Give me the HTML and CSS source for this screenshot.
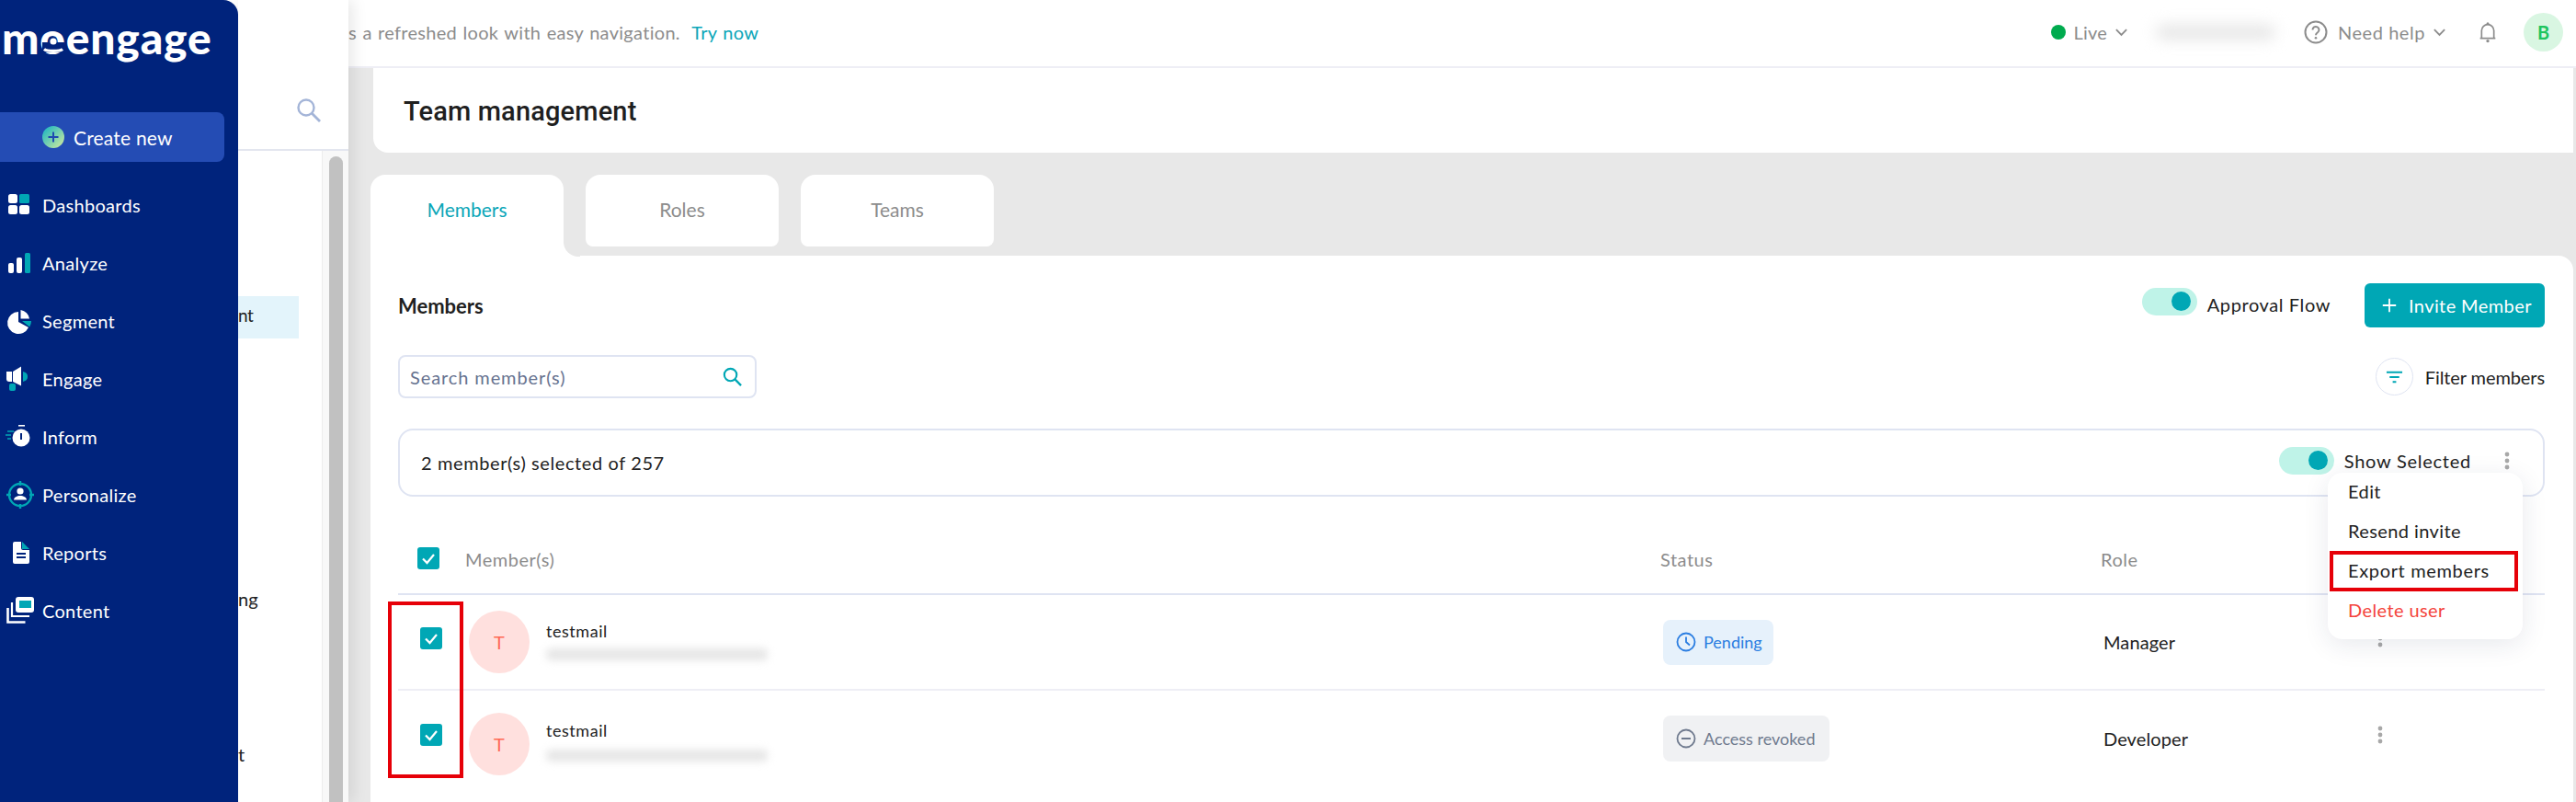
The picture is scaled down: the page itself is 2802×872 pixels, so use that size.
FILE: index.html
```html
<!DOCTYPE html>
<html lang="en">
<head>
<meta charset="utf-8">
<title>Team management</title>
<link rel="stylesheet" href="styles.css">
</head>
<body>
<div class="app">
  <aside class="sidebar">
    <div class="logo">moengage<svg class="logo-person" viewBox="0 0 30 30"><rect x="3" y="17" width="24" height="11" fill="#00237c"/><circle cx="15" cy="16" r="3.600" fill="#fff"/><path d="M5 24.500c3 2.500 17 2.500 20 0" fill="none" stroke="#fff" stroke-width="3.200"/></svg></div>
    <button class="create"><svg class="create-icon" viewBox="0 0 24 24"><defs><linearGradient id="cg" x1="0" y1="0" x2="1" y2="1"><stop offset="0" stop-color="#10b3c4"/><stop offset="1" stop-color="#d8ec9c"/></linearGradient></defs><circle cx="12" cy="12" r="12" fill="url(#cg)"/><path d="M12 6.500v11M6.500 12h11" stroke="#1f4ab0" stroke-width="2"/></svg>Create new</button>
    <nav class="nav">
      <a class="nav-item"><svg viewBox="0 0 34 34"><rect x="6" y="5" width="10" height="10" rx="2.500" fill="#fff"/><rect x="18" y="5" width="11" height="10" rx="1.500" fill="#00a7b5"/><rect x="6" y="17" width="10" height="10" rx="2.500" fill="#fff"/><rect x="18" y="17" width="11" height="10" rx="2.500" fill="#fff"/></svg>Dashboards</a>
      <a class="nav-item"><svg viewBox="0 0 34 34"><rect x="6" y="17" width="6" height="11" rx="2" fill="#fff"/><rect x="15" y="11" width="6" height="17" rx="2" fill="#fff"/><rect x="24" y="6" width="6" height="22" rx="1.500" fill="#00a7b5"/></svg>Analyze</a>
      <a class="nav-item"><svg viewBox="0 0 34 34"><path d="M17 7a12 12 0 1 0 11 17l-11-6z" fill="#fff"/><path d="M19.500 5a12 12 0 0 1 9.500 9.500h-9.500z" fill="#fff"/><path d="M21 17h10a12 12 0 0 1-1.800 6.500z" fill="#00a7b5"/></svg>Segment</a>
      <a class="nav-item"><svg viewBox="0 0 34 34"><path d="M4 9h6v11H7a3 3 0 0 1-3-3z" fill="#fff"/><path d="M11 9l9-5.500v21L11 20z" fill="#fff"/><path d="M22 9c3 1 5 2 5 5.500s-2 4.500-5 5.500z" fill="#00a7b5"/><rect x="7" y="22" width="7" height="8" rx="2" fill="#00a7b5"/></svg>Engage</a>
      <a class="nav-item"><svg viewBox="0 0 34 34"><circle cx="20" cy="18" r="9.500" fill="#fff"/><rect x="17" y="4" width="7" height="1.600" fill="#fff"/><rect x="19" y="13" width="2" height="7" fill="#00237c"/><path d="M5 11h7M3 15h6M5 19h4" stroke="#00a7b5" stroke-width="1.600"/></svg>Inform</a>
      <a class="nav-item"><svg viewBox="0 0 34 34"><circle cx="19" cy="17" r="12" fill="none" stroke="#00a7b5" stroke-width="2.400"/><path d="M19 2v5M19 27v5M4 17h5M29 17h5" stroke="#00a7b5" stroke-width="2.400"/><circle cx="19" cy="13" r="3.600" fill="#fff"/><path d="M12 22.500c.5-6 13.500-6 14 0z" fill="#fff"/></svg>Personalize</a>
      <a class="nav-item"><svg viewBox="0 0 34 34"><path d="M11 7a2 2 0 0 1 2-2h7v7a2 2 0 0 0 2 2h7v13a2 2 0 0 1-2 2H13a2 2 0 0 1-2-2z" fill="#fff"/><path d="M21 5l8 8h-8z" fill="#00a7b5"/><path d="M15 18h10M15 22h10" stroke="#00237c" stroke-width="2"/></svg>Reports</a>
      <a class="nav-item"><svg viewBox="0 0 34 34"><rect x="14" y="2" width="20" height="17" rx="3" fill="#fff"/><rect x="18" y="6" width="13" height="8" fill="#00a7b5"/><path d="M10 8v15h19" fill="none" stroke="#fff" stroke-width="2.200"/><path d="M5.500 14v15.500h19" fill="none" stroke="#fff" stroke-width="2.600"/></svg>Content</a>
    </nav>
  </aside>

  <aside class="subpanel">
    <div class="sub-head"><svg class="sub-search" viewBox="0 0 28 28"><circle cx="11" cy="11" r="8.500" fill="none" stroke="#a4b5d8" stroke-width="2.400"/><path d="M17 17l9 9" stroke="#a4b5d8" stroke-width="2.800"/></svg></div>
    <div class="sub-body">
      <div class="sub-list">
        <div class="sub-item sub-active">nt</div>
        <div class="sub-item sub-ng">ng</div>
        <div class="sub-item sub-t">t</div>
      </div>
      <div class="sub-track"><div class="sub-thumb"></div></div>
    </div>
  </aside>

  <main class="main">
    <header class="topbar">
      <p class="promo">s a refreshed look with easy navigation. <a class="try">Try now</a></p>
      <div class="top-right">
        <span class="dot-live"></span><span class="top-text top-live">Live</span>
        <svg class="chev" viewBox="0 0 16 10"><path d="M2 2l6 6 6-6" fill="none" stroke="#8c8c8c" stroke-width="2"/></svg>
        <span class="blur-account"></span>
        <svg class="help" viewBox="0 0 26 26"><circle cx="13" cy="13" r="11.500" fill="none" stroke="#8c8c8c" stroke-width="2"/><path d="M9.500 10.500a3.500 3.500 0 1 1 5.500 2.800c-1.300.9-2 1.500-2 3" fill="none" stroke="#8c8c8c" stroke-width="2"/><circle cx="13" cy="19.300" r="1.300" fill="#8c8c8c"/></svg>
        <span class="top-text top-help">Need help</span>
        <svg class="chev" viewBox="0 0 16 10"><path d="M2 2l6 6 6-6" fill="none" stroke="#8c8c8c" stroke-width="2"/></svg>
        <svg class="bell" viewBox="0 0 24 28"><path d="M4 21V12a8 8 0 0 1 16 0v9M2 22h20" fill="none" stroke="#8c8c8c" stroke-width="2"/><circle cx="12" cy="3" r="1.800" fill="#8c8c8c"/><circle cx="12" cy="25.500" r="2" fill="#8c8c8c"/></svg>
        <span class="user">B</span>
      </div>
    </header>

    <section class="title-card"><h1>Team management</h1></section>

    <div class="tabs">
      <div class="tab tab-active">Members</div>
      <div class="tab">Roles</div>
      <div class="tab">Teams</div>
    </div>

    <section class="card">
      <div class="row-head">
        <h2>Members</h2>
        <div class="head-actions">
          <span class="toggle"><span class="knob"></span></span>
          <span class="label approval">Approval Flow</span>
          <button class="invite"><svg viewBox="0 0 20 20"><path d="M10 2v16M2 10h16" stroke="#fff" stroke-width="2"/></svg>Invite Member</button>
        </div>
      </div>

      <div class="row-search">
        <div class="search"><span>Search member(s)</span><svg viewBox="0 0 24 24"><circle cx="10" cy="10" r="7" fill="none" stroke="#00a7b5" stroke-width="2.200"/><path d="M15 15l7 7" stroke="#00a7b5" stroke-width="2.400"/></svg></div>
        <div class="filter"><span class="filter-btn"><svg viewBox="0 0 20 14"><path d="M1 1.500h18M4.500 7h11M8 12.500h4" stroke="#00a7b5" stroke-width="2"/></svg></span><span class="label filter-label">Filter members</span></div>
      </div>

      <div class="selbar">
        <span class="label sel-count">2 member(s) selected of 257</span>
        <div class="sel-actions">
          <span class="toggle"><span class="knob"></span></span>
          <span class="label show">Show Selected</span>
          <svg class="dots" viewBox="0 0 6 20"><circle cx="3" cy="3" r="2.400"/><circle cx="3" cy="10" r="2.400"/><circle cx="3" cy="17" r="2.400"/></svg>
        </div>
        <ul class="menu">
          <li>Edit</li>
          <li>Resend invite</li>
          <li class="menu-export">Export members<span class="mark mark-export"></span></li>
          <li class="menu-delete">Delete user</li>
        </ul>
      </div>

      <div class="table">
        <div class="thead">
          <span class="check check-head"><svg viewBox="0 0 24 24"><path d="M6 12.500l4.500 4.500L18 8" fill="none" stroke="#fff" stroke-width="2.200"/></svg></span>
          <span class="th">Member(s)</span>
          <span class="th">Status</span>
          <span class="th">Role</span>
        </div>
        <div class="tbody">
          <span class="mark mark-rows"></span>
          <div class="tr">
            <span class="check"><svg viewBox="0 0 24 24"><path d="M6 12.500l4.500 4.500L18 8" fill="none" stroke="#fff" stroke-width="2.200"/></svg></span>
            <div class="member">
              <span class="avatar">T</span>
              <div class="who"><span class="name">testmail</span><span class="blur-mail"></span></div>
            </div>
            <div><span class="badge badge-pending"><svg viewBox="0 0 22 22"><circle cx="11" cy="11" r="9.500" fill="none" stroke="currentColor" stroke-width="1.800"/><path d="M11 5.500V11l4 3.500" fill="none" stroke="currentColor" stroke-width="1.800"/></svg>Pending</span></div>
            <span class="label role">Manager</span>
            <svg class="dots" viewBox="0 0 6 20"><circle cx="3" cy="3" r="2.400"/><circle cx="3" cy="10" r="2.400"/><circle cx="3" cy="17" r="2.400"/></svg>
          </div>
          <div class="tr tr-last">
            <span class="check"><svg viewBox="0 0 24 24"><path d="M6 12.500l4.500 4.500L18 8" fill="none" stroke="#fff" stroke-width="2.200"/></svg></span>
            <div class="member member-low">
              <span class="avatar">T</span>
              <div class="who"><span class="name">testmail</span><span class="blur-mail"></span></div>
            </div>
            <div><span class="badge badge-revoked"><svg viewBox="0 0 22 22"><circle cx="11" cy="11" r="9.500" fill="none" stroke="currentColor" stroke-width="1.800"/><path d="M6 11h10" stroke="currentColor" stroke-width="2"/></svg>Access revoked</span></div>
            <span class="label role">Developer</span>
            <svg class="dots" viewBox="0 0 6 20"><circle cx="3" cy="3" r="2.400"/><circle cx="3" cy="10" r="2.400"/><circle cx="3" cy="17" r="2.400"/></svg>
          </div>
        </div>
      </div>
    </section>
  </main>
</div>
</body>
</html>
```

FILE: styles.css
```css
* { box-sizing: border-box; }
html, body { margin: 0; height: 100%; overflow: hidden; }
body { font-family: Lato, "Liberation Sans", sans-serif; font-size: 20px; color: #1f1f1f; background: #fff; }
h1, h2, p, ul { margin: 0; padding: 0; }
.app { display: flex; height: 872px; width: 2802px; overflow: hidden; }

/* Sidebar */
.sidebar { flex: 0 0 259px; background: #00237c; border-top-right-radius: 16px; color: #fff; position: relative; z-index: 3; }
.logo { height: 122px; padding: 9px 0 0 2px; font-size: 48px; line-height: 64px; font-weight: 900; letter-spacing: 0.8px; position: relative; }
.logo-person { position: absolute; left: 43px; top: 29px; width: 30px; height: 30px; }
.create { display: flex; align-items: center; width: 244px; height: 54px; padding: 0 0 0 46px; border: 0; border-radius: 0 8px 8px 0; background: #244cb4; color: #fff; font: inherit; font-size: 21px; gap: 10px; letter-spacing: 0.2px; }
.create-icon { width: 24px; height: 24px; }
.nav { display: flex; flex-direction: column; margin-top: 15px; }
.nav-item { display: flex; align-items: center; height: 63px; padding-left: 3px; gap: 9px; font-size: 20px; letter-spacing: 0.3px; }
.nav-item svg { width: 34px; height: 34px; flex: none; }

/* Secondary panel */
.subpanel { flex: 0 0 120px; background: #fff; position: relative; z-index: 2; box-shadow: 4px 0 16px rgba(0,0,0,.1); display: flex; flex-direction: column; height: 872px; }
.sub-head { height: 164px; border-bottom: 2px solid #e3e6ef; padding: 106px 0 0 63px; }
.sub-search { width: 28px; height: 28px; display: block; }
.sub-body { flex: 1; display: flex; min-height: 0; }
.sub-list { flex: 0 0 91px; font-size: 20px; color: #222; position: relative; }
.sub-active { width: 66px; height: 46px; margin-top: 158px; background: #e3f4fb; line-height: 42px; font-size: 19px; letter-spacing: -0.5px; }
.sub-ng { margin-top: 268px; line-height: 30px; }
.sub-t { margin-top: 139px; line-height: 30px; }
.sub-track { flex: 1; background: #f8f8f8; border-left: 1px solid #ececec; padding: 6px 6px 0 7px; }
.sub-thumb { height: 800px; background: #c1c1c1; border-radius: 8px 8px 0 0; }

/* Main */
.main { flex: 1; min-width: 0; background: #e8e8e8; display: flex; flex-direction: column; }
.topbar { height: 74px; flex: none; background: #fff; border-bottom: 2px solid #eeeef5; display: flex; align-items: center; justify-content: space-between; font-size: 20px; color: #8c8c8c; padding-bottom: 2px; }
.promo { letter-spacing: 0.3px; word-spacing: 1px; }
.try { color: #0aa6b8; margin-left: 6px; }
.top-right { display: flex; align-items: center; padding-right: 14px; }
.dot-live { width: 16px; height: 16px; border-radius: 50%; background: #00ab4e; }
.top-text { color: #8c8c8c; letter-spacing: 0.2px; }
.top-live { margin-left: 9px; }
.chev { width: 15px; height: 10px; margin-left: 8px; }
.blur-account { width: 130px; height: 16px; margin: 0 31px 0 30px; background: #e6e6e6; border-radius: 8px; filter: blur(8px); }
.help { width: 26px; height: 26px; }
.top-text.top-help { margin-left: 11px; letter-spacing: 0.55px; }
.bell { width: 20px; height: 26px; margin-left: 35px; }
.user { width: 43px; height: 42px; margin-left: 29px; border-radius: 50%; background: #d9f6e2; color: #1fc45e; display: flex; align-items: center; justify-content: center; font-weight: 700; font-size: 20px; }

.title-card { height: 92px; flex: none; margin: 0 3px 0 27px; background: #fff; border-radius: 0 0 0 16px; display: flex; align-items: center; padding: 2px 0 0 33px; }
h1 { font-size: 29px; font-weight: 500; font-family: Roboto, "Liberation Sans", sans-serif; letter-spacing: 0.15px; }

.tabs { display: flex; gap: 24px; margin: 24px 0 0 24px; height: 88px; flex: none; }
.tab { width: 210px; height: 78px; background: #fff; border-radius: 16px 16px 8px 8px; display: flex; align-items: center; justify-content: center; color: #8c8c8c; font-size: 21px; padding-bottom: 3px; }
.tab-active { height: 88px; color: #0aa6b8; border-radius: 16px 16px 0 0; position: relative; padding-bottom: 13px; }
.tab-active::after { content: ""; position: absolute; right: -18px; bottom: -1px; width: 18px; height: 18px; background: #fff; }
.tab-active::before { content: ""; position: absolute; right: -18px; bottom: -1px; width: 18px; height: 19px; background: #e8e8e8; border-bottom-left-radius: 16px; z-index: 1; }

.card { flex: 1; margin: 0 3px 0 24px; background: #fff; border-radius: 0 16px 0 0; padding: 30px 31px 0 30px; position: relative; }
.row-head { display: flex; justify-content: space-between; align-items: center; height: 48px; }
h2 { font-size: 22px; font-weight: 700; margin-top: 0; }
.head-actions { display: flex; align-items: center; }
.toggle { width: 60px; height: 30px; border-radius: 15px; background: #bff3e8; position: relative; display: block; flex: none; }
.knob { position: absolute; right: 7px; top: 4px; width: 21px; height: 21px; border-radius: 50%; background: #00a7b5; }
.label { font-size: 20px; color: #222; letter-spacing: 0.1px; }
.label.approval { margin: -2px 0 0 11px; letter-spacing: 0.6px; }
.head-actions .toggle { margin-top: -8px; }
.invite { width: 196px; height: 48px; margin-left: 37px; border: 0; border-radius: 6px; background: #00a7b5; color: #fff; font: inherit; font-size: 20px; display: flex; align-items: center; padding-left: 18px; gap: 12px; letter-spacing: 0.4px; white-space: nowrap; }
.invite svg { width: 18px; height: 18px; flex: none; }

.row-search { display: flex; justify-content: space-between; align-items: center; margin-top: 30px; height: 47px; }
.search { width: 390px; height: 47px; border: 2px solid #dfe4f2; border-radius: 8px; padding: 0 13px 0 11px; display: flex; align-items: center; justify-content: space-between; color: #66728f; font-size: 20px; letter-spacing: 0.9px; }
.search svg { width: 23px; height: 23px; }
.filter { display: flex; align-items: center; gap: 13px; }
.label.filter-label { letter-spacing: -0.1px; }
.filter-btn { width: 41px; height: 41px; border: 1.5px solid #dfe4f2; border-radius: 50%; display: flex; align-items: center; justify-content: center; }
.filter-btn svg { width: 19px; height: 14px; }

.selbar { margin-top: 33px; height: 74px; border: 2px solid #dfe4f2; border-radius: 16px; display: flex; align-items: center; justify-content: space-between; padding: 0 0 0 23px; position: relative; }
.label.sel-count { letter-spacing: 0.6px; }
.sel-actions { display: flex; align-items: center; margin-top: -4px; padding-right: 36px; }
.label.show { margin-left: 11px; letter-spacing: 0.75px; }
.dots { width: 6px; height: 20px; fill: #a8a8a8; flex: none; }
.sel-actions .dots { margin-left: 36px; }
.menu { position: absolute; left: 2097px; top: 46px; width: 212px; height: 181px; list-style: none; background: #fff; border-radius: 16px; box-shadow: 0 6px 28px rgba(30,40,80,.1); padding: 0; z-index: 4; font-size: 20px; color: #222; display: flex; flex-direction: column; }
.menu li { height: 43px; line-height: 41px; padding-left: 22px; position: relative; letter-spacing: 0.4px; }
.menu .menu-export { letter-spacing: 0.65px; }
.menu .menu-delete { color: #f4443c; }
.mark { position: absolute; border: 4px solid #e60008; pointer-events: none; }
.mark-export { left: 2px; top: -1px; width: 205px; height: 44px; }

.thead { display: grid; grid-template-columns: 73px 1300px 479px 1fr; align-items: center; height: 107px; padding-top: 30px; border-bottom: 2px solid #dfe4f2; position: relative; }
.check { width: 24px; height: 24px; background: #00a7b5; border-radius: 3px; display: block; margin-left: 24px; margin-top: -8px; }
.check svg { display: block; width: 24px; height: 24px; }
.check.check-head { margin-left: 21px; margin-top: -2px; }
.th { font-size: 20px; color: #8c8c8c; letter-spacing: 0.5px; }
.tbody { position: relative; }
.mark-rows { left: -11px; top: 7px; width: 82px; height: 192px; z-index: 2; }
.tr { display: grid; grid-template-columns: 77px 1299px 479px 301px 6px; align-items: center; height: 104px; border-bottom: 2px solid #eeeef5; }
.tr-last { border-bottom: 0; }
.tr > .dots { margin: -8px 0 0 -3px; }
.member { display: flex; align-items: center; gap: 18px; }
.member-low { margin-top: 12px; }
.avatar { width: 66px; height: 68px; border-radius: 50%; background: #ffe0de; color: #ff6a55; display: flex; align-items: center; justify-content: center; font-size: 20px; flex: none; }
.who { display: flex; flex-direction: column; gap: 7px; margin-top: -5px; }
.member-low .who { margin-top: -8px; gap: 9px; }
.name { font-size: 18px; line-height: 24px; color: #222; letter-spacing: 0.55px; }
.blur-mail { width: 241px; height: 13px; background: #e6e6e6; border-radius: 5px; filter: blur(4px); display: block; }
.badge { display: inline-flex; align-items: center; height: 49px; padding: 0 12px 0 14px; border-radius: 8px; gap: 8px; font-size: 18px; }
.badge svg { width: 22px; height: 22px; }
.badge-pending { background: #e6f1fb; color: #2a7de1; width: 120px; }
.badge-revoked { background: #f0f1f3; color: #6f7a8e; width: 181px; height: 50px; }
```
